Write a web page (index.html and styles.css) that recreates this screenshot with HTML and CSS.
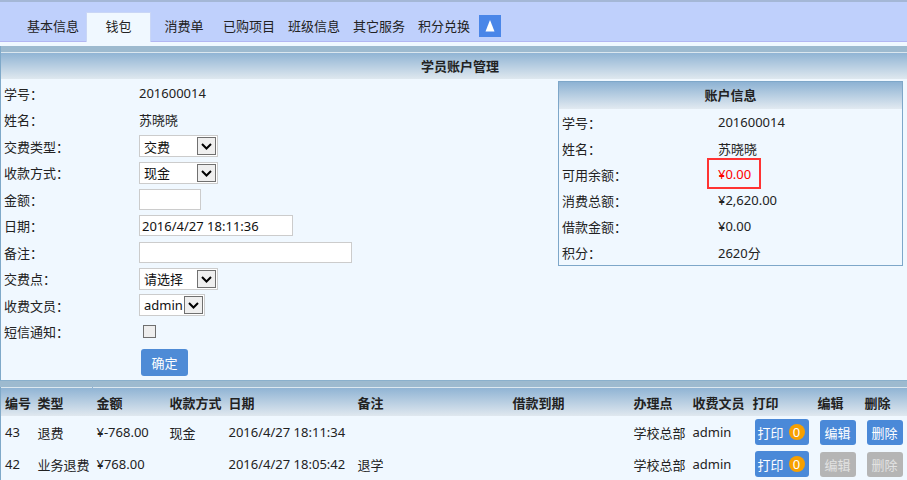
FILE: index.html
```html
<!DOCTYPE html>
<html>
<head>
  <meta charset="utf-8">
  <title>学员账户管理</title>
  <link rel="stylesheet" href="styles.css">
</head>
<body>
  <div class="nav">
    <a class="tab">基本信息</a>
    <a class="tab active">钱包</a>
    <a class="tab">消费单</a>
    <a class="tab">已购项目</a>
    <a class="tab">班级信息</a>
    <a class="tab">其它服务</a>
    <a class="tab">积分兑换</a>
    <span class="up-btn">
      <svg width="22" height="22" viewBox="0 0 22 22"><polygon points="6.5,16.5 11,5 15.5,16.5" fill="#fff"/></svg>
    </span>
  </div>

  <div class="panel">
    <div class="bar-head">学员账户管理</div>
    <div class="panel-body">
      <div class="form">
        <div class="row"><span>学号：</span><span>201600014</span></div>
        <div class="row"><span>姓名：</span><span>苏晓晓</span></div>
        <div class="row"><span>交费类型：</span>
          <span class="sel w79"><span class="sel-text">交费</span><span class="sel-arrow"><svg width="17" height="16" viewBox="0 0 17 16"><polyline points="4,6 8.5,10.5 13,6" fill="none" stroke="#000" stroke-width="2"/></svg></span></span>
        </div>
        <div class="row"><span>收款方式：</span>
          <span class="sel w79"><span class="sel-text">现金</span><span class="sel-arrow"><svg width="17" height="16" viewBox="0 0 17 16"><polyline points="4,6 8.5,10.5 13,6" fill="none" stroke="#000" stroke-width="2"/></svg></span></span>
        </div>
        <div class="row"><span>金额：</span><input class="txt w62" type="text"></div>
        <div class="row"><span>日期：</span><input class="txt w154" type="text" value="2016/4/27 18:11:36"></div>
        <div class="row"><span>备注：</span><input class="txt w213" type="text"></div>
        <div class="row"><span>交费点：</span>
          <span class="sel w79"><span class="sel-text">请选择</span><span class="sel-arrow"><svg width="17" height="16" viewBox="0 0 17 16"><polyline points="4,6 8.5,10.5 13,6" fill="none" stroke="#000" stroke-width="2"/></svg></span></span>
        </div>
        <div class="row"><span>收费文员：</span>
          <span class="sel w66"><span class="sel-text">admin</span><span class="sel-arrow"><svg width="17" height="16" viewBox="0 0 17 16"><polyline points="4,6 8.5,10.5 13,6" fill="none" stroke="#000" stroke-width="2"/></svg></span></span>
        </div>
        <div class="row"><span>短信通知：</span><input class="chk" type="checkbox"></div>
        <div class="row-btn"><button class="ok-btn">确定</button></div>
      </div>

      <div class="info">
        <div class="info-head">账户信息</div>
        <div class="info-row"><span>学号：</span><span>201600014</span></div>
        <div class="info-row"><span>姓名：</span><span>苏晓晓</span></div>
        <div class="info-row"><span>可用余额：</span><span class="hl">¥0.00</span></div>
        <div class="info-row"><span>消费总额：</span><span>¥2,620.00</span></div>
        <div class="info-row"><span>借款金额：</span><span>¥0.00</span></div>
        <div class="info-row"><span>积分：</span><span>2620分</span></div>
      </div>
    </div>
  </div>

  <div class="list">
    <table>
      <colgroup>
        <col style="width:33px"><col style="width:59px"><col style="width:73px"><col style="width:59px">
        <col style="width:129px"><col style="width:155px"><col style="width:121px"><col style="width:59px">
        <col style="width:60px"><col style="width:65px"><col style="width:47px"><col>
      </colgroup>
      <thead>
        <tr>
          <th>编号</th><th>类型</th><th>金额</th><th>收款方式</th><th>日期</th><th>备注</th>
          <th>借款到期</th><th>办理点</th><th>收费文员</th><th>打印</th><th>编辑</th><th>删除</th>
        </tr>
      </thead>
      <tbody>
        <tr>
          <td>43</td><td>退费</td><td>¥-768.00</td><td>现金</td><td>2016/4/27 18:11:34</td><td></td>
          <td></td><td>学校总部</td><td>admin</td>
          <td><span class="btn print">打印<span class="badge">0</span></span></td>
          <td><span class="btn">编辑</span></td>
          <td><span class="btn">删除</span></td>
        </tr>
        <tr>
          <td>42</td><td>业务退费</td><td>¥768.00</td><td></td><td>2016/4/27 18:05:42</td><td>退学</td>
          <td></td><td>学校总部</td><td>admin</td>
          <td><span class="btn print">打印<span class="badge">0</span></span></td>
          <td><span class="btn disabled">编辑</span></td>
          <td><span class="btn disabled">删除</span></td>
        </tr>
      </tbody>
    </table>
  </div>
</body>
</html>
```

FILE: styles.css
```css
body {
  margin: 0;
  background-color: #f0f8ff;
  font-family: "Noto Sans", "Noto Sans CJK SC", sans-serif;
  font-size: 13px;
  color: #222;
}

/* top tabs */
.nav {
  display: flex;
  align-items: flex-end;
  gap: 1px;
  height: 39px;
  padding-left: 21px;
  background-color: #bfd0fc;
  border-top: 2px solid #a4b7d6;
  border-bottom: 1px solid #b2b6f2;
}
.tab {
  width: 64px;
  height: 29px;
  line-height: 29px;
  text-align: center;
  color: #222;
  cursor: pointer;
}
.tab.active {
  width: 65px;
  height: 30px;
  margin-bottom: -1px;
  background-color: #f0f8ff;
  box-shadow: inset 1px 1px 0 #c9d6f6, inset -1px 0 0 #c9d6f6;
}
.up-btn {
  width: 22px;
  height: 22px;
  margin-left: 2px;
  margin-bottom: 4px;
  background-color: #4a86e8;
}
.up-btn svg {
  display: block;
}

/* panels */
.panel {
  margin-top: 4px;
  border-left: 1px solid #7fa9c9;
  border-bottom: 1px solid #8ab0cc;
}
.bar-head {
  height: 26px;
  line-height: 26px;
  text-align: center;
  font-weight: bold;
  border-top: 6px solid #9dbacf;
  box-shadow: inset 0 1px 0 #dbe7ef;
  padding: 1px 0 0 12px;
  background: linear-gradient(#8db2d3, #dfe8ef);
}
.panel-body {
  display: flex;
  align-items: flex-start;
}
.form {
  flex: 1;
  padding: 1px 0 4px 3px;
}
.row {
  display: grid;
  grid-template-columns: 135px auto;
  justify-items: start;
  align-items: center;
  height: 26.5px;
}
.row-btn {
  padding: 4px 0 0 137px;
}

/* fields */
.txt {
  box-sizing: border-box;
  height: 21px;
  padding: 0 2px;
  border: 1px solid #ccc;
  background-color: #fff;
  font-family: inherit;
  font-size: 13px;
  color: #111;
  outline: none;
}
.w62 { width: 62px; }
.w154 { width: 154px; }
.w213 { width: 213px; }
.w79 { width: 79px; }
.w66 { width: 66px; }
.sel {
  box-sizing: border-box;
  display: flex;
  align-items: center;
  justify-content: space-between;
  height: 22px;
  padding: 1px;
  border: 1px solid #ccc;
  background-color: #fff;
}
.sel-text {
  padding-left: 3px;
  color: #111;
  white-space: nowrap;
}
.sel-arrow {
  box-sizing: border-box;
  width: 19px;
  height: 18px;
  border: 1px solid #707070;
  background-color: #efefef;
}
.sel-arrow svg {
  display: block;
}
.chk {
  appearance: none;
  box-sizing: border-box;
  width: 13px;
  height: 13px;
  margin: 0 0 0 4px;
  border: 1px solid #6f6f6f;
  background-color: #eee;
}
.ok-btn {
  width: 47px;
  height: 27px;
  border: none;
  border-radius: 3px;
  background-color: #4e8bd6;
  color: #fff;
  font-family: inherit;
  font-size: 13px;
  padding: 0;
}

/* account info */
.info {
  width: 343px;
  margin: 2px 4px 0 0;
  border: 1px solid #7ea7c9;
}
.info-head {
  height: 27px;
  line-height: 27px;
  text-align: center;
  font-weight: bold;
  background: linear-gradient(#8db2d3, #e2eaf1);
}
.info-row {
  display: grid;
  grid-template-columns: 156px auto;
  justify-items: start;
  align-items: center;
  height: 26px;
  padding-left: 3px;
}
.hl {
  position: relative;
  color: #f00;
}
.hl::after {
  content: "";
  position: absolute;
  left: -11px;
  right: -10px;
  top: -7px;
  bottom: -6px;
  border: 2px solid #f33;
}

/* list */
.list {
  border-top: 6px solid #9dbacf;
}
table {
  width: 100%;
  table-layout: fixed;
  border-collapse: collapse;
}
th {
  height: 28px;
  padding: 1px 0 0 4px;
  text-align: left;
  font-weight: bold;
  white-space: nowrap;
  box-shadow: inset 0 1px 0 #dbe7ef;
  background: linear-gradient(#8db2d3, #e0e8ef);
}
th:first-child {
  border-left: 1px solid #7fa9c9;
}
td {
  height: 32px;
  padding: 0 0 0 4px;
  white-space: nowrap;
  overflow: hidden;
}
td:first-child {
  border-left: 1px solid #7fa9c9;
}
.btn {
  display: inline-flex;
  align-items: center;
  height: 25px;
  margin-left: 2px;
  padding: 0 5px;
  border-radius: 3px;
  background-color: #4a89d8;
  color: #fff;
}
.btn.print {
  padding: 0 4px 0 3px;
  height: 26px;
}
.btn.disabled {
  background-color: #b5b5b5;
  color: #e2e2e2;
}
.badge {
  display: inline-block;
  width: 16px;
  height: 16px;
  line-height: 16px;
  margin-left: 5px;
  border-radius: 50%;
  background-color: #f7a000;
  color: #fff;
  font-size: 13px;
  text-align: center;
}
```
